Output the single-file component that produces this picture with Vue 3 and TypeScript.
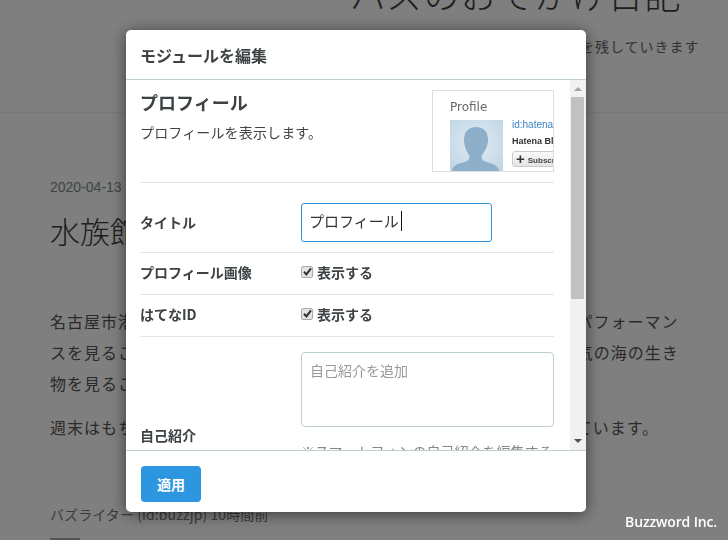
<script setup lang="ts">
const paragraphs: string[][] = [
  [
    '名古屋市港区にある名古屋港水族館に行きました。シャチやイルカのパフォーマン',
    'スを見ることができるだけでなく、南極や赤道付近などの様々な雰囲気の海の生き',
    '物を見ることができます。',
  ],
  ['週末はもちろん平日でも多くの家族連れや学生も、カップルで賑わっています。'],
]
const checks = [
  { label: 'プロフィール画像' },
  { label: 'はてなID' },
]
</script>

<template>
  <div class="page">
    <header class="blog-head">
      <h1 class="blog-title">バズのおでかけ日記</h1>
      <p class="blog-desc">おでかけした場所の記録を残していきます</p>
    </header>
    <main class="entry">
      <div class="date">2020-04-13</div>
      <h2 class="entry-title">水族館に行ってきました</h2>
      <div class="entry-body">
        <p v-for="(lines, i) in paragraphs" :key="i" class="para">
          <span v-for="(line, j) in lines" :key="j" class="line">{{ line }}</span>
        </p>
      </div>
      <div class="author">バズライター (id:buzzjp) 10時間前</div>
      <div class="stub"></div>
    </main>
  </div>

  <div class="overlay">
    <section class="modal">
      <div class="modal-head">モジュールを編集</div>
      <div class="modal-main">
        <div class="modal-body">
          <div class="intro">
            <div class="intro-text">
              <h3 class="intro-title">プロフィール</h3>
              <p class="intro-desc">プロフィールを表示します。</p>
            </div>
            <div class="preview">
              <div class="preview-title">Profile</div>
              <div class="preview-row">
                <div class="avatar">
                  <svg width="53" height="51" viewBox="0 0 53 51">
                    <path
                      fill="#8eafca"
                      d="M26 7c-8 0-12 5-12 13 0 6 2 11 5 15 1 2 0 5-2 6-5 2-12 3-14 7-1 1-1 2-1 3h47c0-1 0-2-1-3-2-4-9-5-14-7-2-1-3-4-2-6 3-4 6-9 6-15 0-8-4-13-12-13z"
                    />
                  </svg>
                </div>
                <div class="preview-info">
                  <div class="preview-id">id:hatena</div>
                  <div class="preview-name">Hatena Blog</div>
                  <div class="preview-btn"><span class="plus">+</span>Subscribe</div>
                </div>
              </div>
            </div>
          </div>

          <div class="row row-title">
            <div class="label">タイトル</div>
            <div class="input">プロフィール<span class="caret"></span></div>
          </div>

          <div v-for="c in checks" :key="c.label" class="row row-check">
            <div class="label">{{ c.label }}</div>
            <label class="check">
              <span class="box">
                <svg width="9" height="9" viewBox="0 0 9 9">
                  <path d="M1 4.8 3.4 7.4 8 1.4" fill="none" stroke="#333" stroke-width="2" />
                </svg>
              </span>
              表示する
            </label>
          </div>

          <div class="row row-bio">
            <div class="label bio-label">自己紹介</div>
            <div class="bio-control">
              <div class="textarea">自己紹介を追加</div>
              <p class="hint">※スマートフォンの自己紹介を編集する</p>
            </div>
          </div>
        </div>

        <div class="scrollbar">
          <span class="arrow arrow-up"></span>
          <div class="thumb"></div>
          <span class="arrow arrow-down"></span>
        </div>
      </div>
      <div class="modal-foot">
        <button class="apply" type="button">適用</button>
      </div>
    </section>
  </div>

  <div class="watermark">Buzzword Inc.</div>
</template>

<style>
html,
body {
  margin: 0;
  height: 540px;
  overflow: hidden;
  background: #fff;
}
</style>

<style scoped>
.page {
  height: 540px;
  overflow: hidden;
  color: #555;
  font-family: "Noto Sans CJK JP", "Noto Sans", sans-serif;
}
.blog-head {
  height: 113px;
  box-sizing: border-box;
  border-bottom: 1px solid #f0f0f0;
  padding-left: 350px;
  overflow: hidden;
}
.blog-title {
  margin: -30px 0 0;
  font-size: 36px;
  line-height: 46px;
  font-weight: 300;
  letter-spacing: 0.8px;
  color: #3c3c3c;
  white-space: nowrap;
}
.blog-desc {
  margin: 0 0 0 65px;
  padding-top: 18px;
  font-size: 14px;
  line-height: 24px;
  letter-spacing: 1px;
  color: #666;
  white-space: nowrap;
}
.entry {
  padding: 66px 0 0 50px;
}
.date {
  font-family: "Liberation Sans", sans-serif;
  font-size: 14px;
  line-height: 16px;
  color: #7b8a8a;
}
.entry-title {
  margin: 13px 0 0;
  font-size: 30px;
  line-height: 44px;
  font-weight: 300;
  color: #3c3c3c;
  white-space: nowrap;
}
.entry-body {
  margin-top: 54px;
}
.para {
  margin: 0 0 13px;
  font-size: 16px;
  line-height: 31px;
  letter-spacing: 1px;
  white-space: nowrap;
}
.line {
  display: block;
}
.author {
  margin-top: 62px;
  font-size: 14px;
  line-height: 18px;
  letter-spacing: 0.1px;
  color: #777;
  white-space: nowrap;
}
.stub {
  margin-top: 15px;
  width: 30px;
  height: 4px;
  background: #aaa;
}
.overlay {
  position: fixed;
  inset: 0;
  background: rgba(0, 0, 0, 0.5);
}
.modal {
  position: absolute;
  left: 126px;
  top: 30px;
  width: 460px;
  height: 482px;
  display: flex;
  flex-direction: column;
  overflow: hidden;
  background: #fff;
  border-radius: 5px;
  box-shadow: 0 2px 16px rgba(0, 0, 0, 0.55);
  color: #3d4245;
  font-family: "Noto Sans CJK JP", "Noto Sans", sans-serif;
}
.modal-head {
  height: 50px;
  flex: none;
  box-sizing: border-box;
  padding: 13px 14px 0;
  border-bottom: 1px solid #bfcfd3;
  font-size: 16px;
  line-height: 24px;
  font-weight: 700;
}
.modal-main {
  flex: 1;
  min-height: 0;
  display: flex;
}
.modal-body {
  flex: 1;
  min-width: 0;
  overflow: hidden;
  box-sizing: border-box;
  padding: 10px 16px 0 14px;
}
.intro {
  height: 93px;
  display: flex;
  justify-content: space-between;
  box-sizing: border-box;
  border-bottom: 1px solid #e3e6e6;
}
.intro-title {
  margin: -1px 0 0;
  font-size: 18px;
  line-height: 26px;
  font-weight: 700;
}
.intro-desc {
  margin: 5px 0 0;
  font-size: 14px;
  line-height: 24px;
  letter-spacing: 0.15px;
  color: #444;
}
.preview {
  width: 122px;
  height: 82px;
  box-sizing: border-box;
  border: 1px solid #dedede;
  overflow: hidden;
  padding: 8px 0 0 17px;
  font-family: "Liberation Sans", sans-serif;
}
.preview-title {
  font-family: "DejaVu Sans", sans-serif;
  font-size: 12px;
  line-height: 16px;
  color: #666;
}
.preview-row {
  display: flex;
  gap: 9px;
  margin-top: 5px;
}
.avatar {
  width: 53px;
  height: 51px;
  flex: none;
  background: radial-gradient(circle at 50% 45%, #e2edf4, #bcd3e3);
}
.avatar svg {
  display: block;
}
.preview-info {
  white-space: nowrap;
  margin-top: -1px;
}
.preview-id {
  font-size: 10px;
  line-height: 12px;
  color: #3b82c4;
}
.preview-name {
  margin-top: 4px;
  font-size: 9px;
  line-height: 12px;
  font-weight: 700;
  color: #333;
}
.preview-btn {
  margin-top: 4px;
  width: 60px;
  height: 16px;
  box-sizing: border-box;
  border: 1px solid #ccc;
  border-radius: 3px;
  background: linear-gradient(#fafafa, #e4e4e4);
  font-size: 8px;
  line-height: 14px;
  font-weight: 700;
  color: #444;
  padding-left: 3px;
}
.plus {
  font-size: 15px;
  margin-right: 3px;
  color: #333;
  vertical-align: -1px;
}
.row {
  display: grid;
  grid-template-columns: 161px 1fr;
  align-items: center;
  box-sizing: border-box;
  border-bottom: 1px solid #e3e6e6;
}
.label {
  font-size: 14px;
  line-height: 20px;
  font-weight: 700;
}
.row-title {
  height: 70px;
  padding: 19px 0 10px;
}
.input {
  width: 191px;
  height: 39px;
  box-sizing: border-box;
  border: 1px solid #2f94e0;
  border-radius: 3px;
  padding: 0 0 2px 7px;
  font-size: 15px;
  line-height: 34px;
  color: #333;
  display: flex;
  align-items: center;
}
.caret {
  width: 1px;
  height: 20px;
  margin-left: 2px;
  background: #111;
}
.row-check {
  height: 42px;
  padding-bottom: 4px;
}
.check {
  display: flex;
  align-items: center;
  gap: 4px;
  font-size: 14px;
  line-height: 20px;
  font-weight: 700;
}
.box {
  width: 12px;
  height: 12px;
  box-sizing: border-box;
  border: 1px solid #aaa;
  border-radius: 2px;
  background: #e4e4e4;
  display: flex;
  align-items: center;
  justify-content: center;
}
.row-bio {
  border-bottom: 0;
  padding-top: 15px;
  align-items: start;
}
.bio-label {
  margin-top: 73px;
}
.textarea {
  height: 75px;
  box-sizing: border-box;
  border: 1px solid #bcd0d3;
  border-radius: 4px;
  padding: 5px 8px;
  font-size: 14px;
  line-height: 24px;
  color: #999;
}
.hint {
  margin: 12px 0 0;
  font-size: 14px;
  line-height: 24px;
  color: #888;
  white-space: nowrap;
  overflow: hidden;
}
.scrollbar {
  width: 16px;
  flex: none;
  background: #f1f1f1;
  position: relative;
}
.thumb {
  position: absolute;
  left: 1px;
  top: 17px;
  width: 13px;
  height: 202px;
  background: #c1c1c1;
}
.arrow {
  position: absolute;
  left: 4px;
  width: 0;
  height: 0;
  border-left: 4px solid transparent;
  border-right: 4px solid transparent;
}
.arrow-up {
  top: 7px;
  border-bottom: 4px solid #a3a3a3;
}
.arrow-down {
  bottom: 7px;
  border-top: 4px solid #505050;
}
.modal-foot {
  height: 62px;
  flex: none;
  box-sizing: border-box;
  border-top: 1px solid #bfcfd3;
  padding: 15px 15px 0;
}
.apply {
  display: block;
  width: 60px;
  height: 36px;
  padding: 0;
  border: 0;
  border-radius: 4px;
  background: #2d96e0;
  color: #fff;
  font-family: "Noto Sans CJK JP", "Noto Sans", sans-serif;
  font-size: 14px;
  font-weight: 700;
}
.watermark {
  position: fixed;
  right: 11px;
  bottom: 9px;
  font-family: "Open Sans", sans-serif;
  font-size: 14px;
  line-height: 18px;
  font-weight: 600;
  letter-spacing: -0.15px;
  color: #fff;
}
</style>
